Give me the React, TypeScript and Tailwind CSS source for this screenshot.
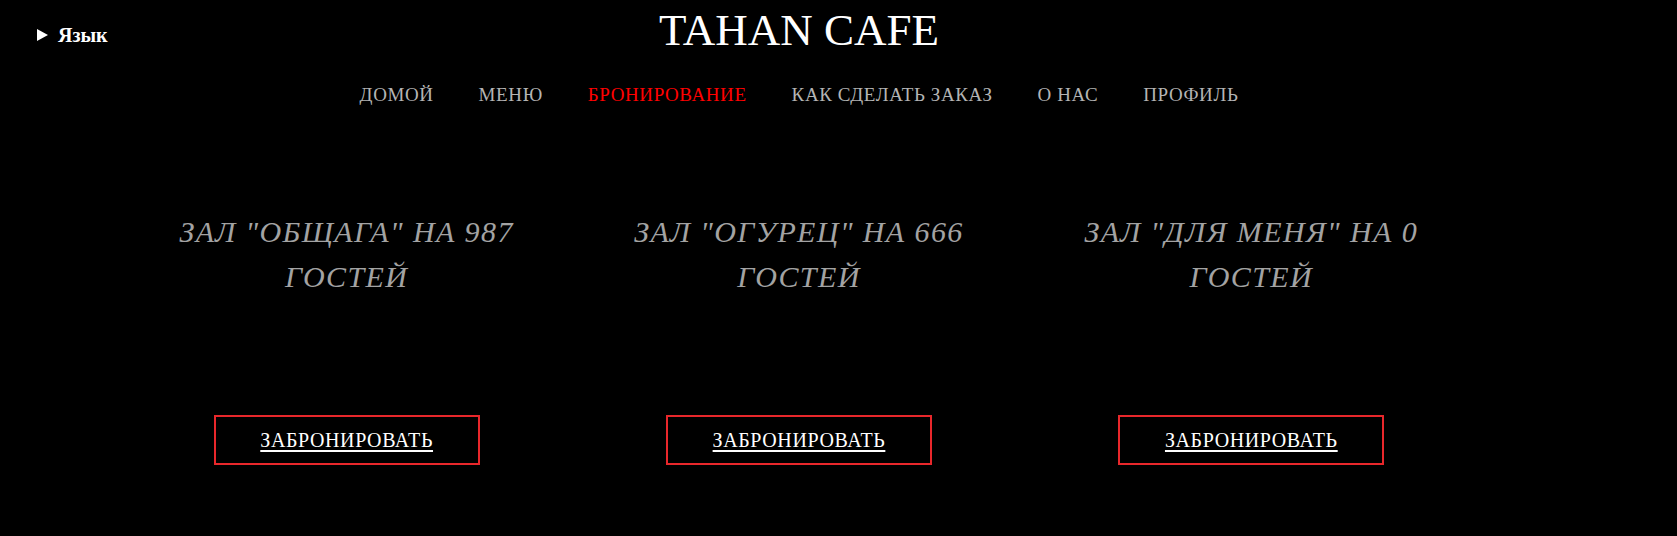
const navItems = [
  { label: 'ДОМОЙ', active: false },
  { label: 'МЕНЮ', active: false },
  { label: 'БРОНИРОВАНИЕ', active: true },
  { label: 'КАК СДЕЛАТЬ ЗАКАЗ', active: false },
  { label: 'О НАС', active: false },
  { label: 'ПРОФИЛЬ', active: false },
]

const halls = [
  { name: 'ОБЩАГА', guests: 987 },
  { name: 'ОГУРЕЦ', guests: 666 },
  { name: 'ДЛЯ МЕНЯ', guests: 0 },
]

export default function App() {
  return (
    <div className="w-full min-h-[536px] bg-black font-['Liberation_Serif',serif]">
      <div className="w-[1598px]">
        {/* ── Header ── */}
        <header className="grid grid-cols-[1fr_auto_1fr] items-start">
          <div className="flex items-center gap-[10px] pl-[37px] pt-[23px] text-white">
            <svg width="11" height="12" viewBox="0 0 11 12" className="fill-white">
              <path d="M0 0 L11 6 L0 12 Z" />
            </svg>
            <span className="text-[20px] font-bold leading-[24px]">Язык</span>
          </div>
          <h1 className="pt-[4px] text-[45px] leading-[52px] text-white m-0">TAHAN CAFE</h1>
          <div />
        </header>

        {/* ── Navigation ── */}
        <nav className="flex justify-center gap-[45px] pt-[28px]">
          {navItems.map((item) => (
            <a
              key={item.label}
              className={
                item.active
                  ? 'text-[19px] leading-[22px] tracking-[0.6px] text-[#ff0000]'
                  : 'text-[19px] leading-[22px] tracking-[0.6px] text-[#b4b4b4]'
              }
            >
              {item.label}
            </a>
          ))}
        </nav>

        {/* ── Halls ── */}
        <main className="w-[1357px] mx-auto grid grid-cols-3 pt-[103px]">
          {halls.map((h) => (
            <div key={h.name} className="flex flex-col items-center">
              <h2 className="px-[24px] text-center italic text-[30px] leading-[45px] tracking-[1.4px] text-[#a3a3a3]">
                ЗАЛ "{h.name}" НА {h.guests} ГОСТЕЙ
              </h2>
              <button className="mt-[116px] w-[266px] h-[50px] border-2 border-[#e8272b] flex items-center justify-center">
                <span className="text-[20px] tracking-[0.6px] text-white underline underline-offset-[3px]">ЗАБРОНИРОВАТЬ</span>
              </button>
            </div>
          ))}
        </main>
      </div>
    </div>
  )
}
